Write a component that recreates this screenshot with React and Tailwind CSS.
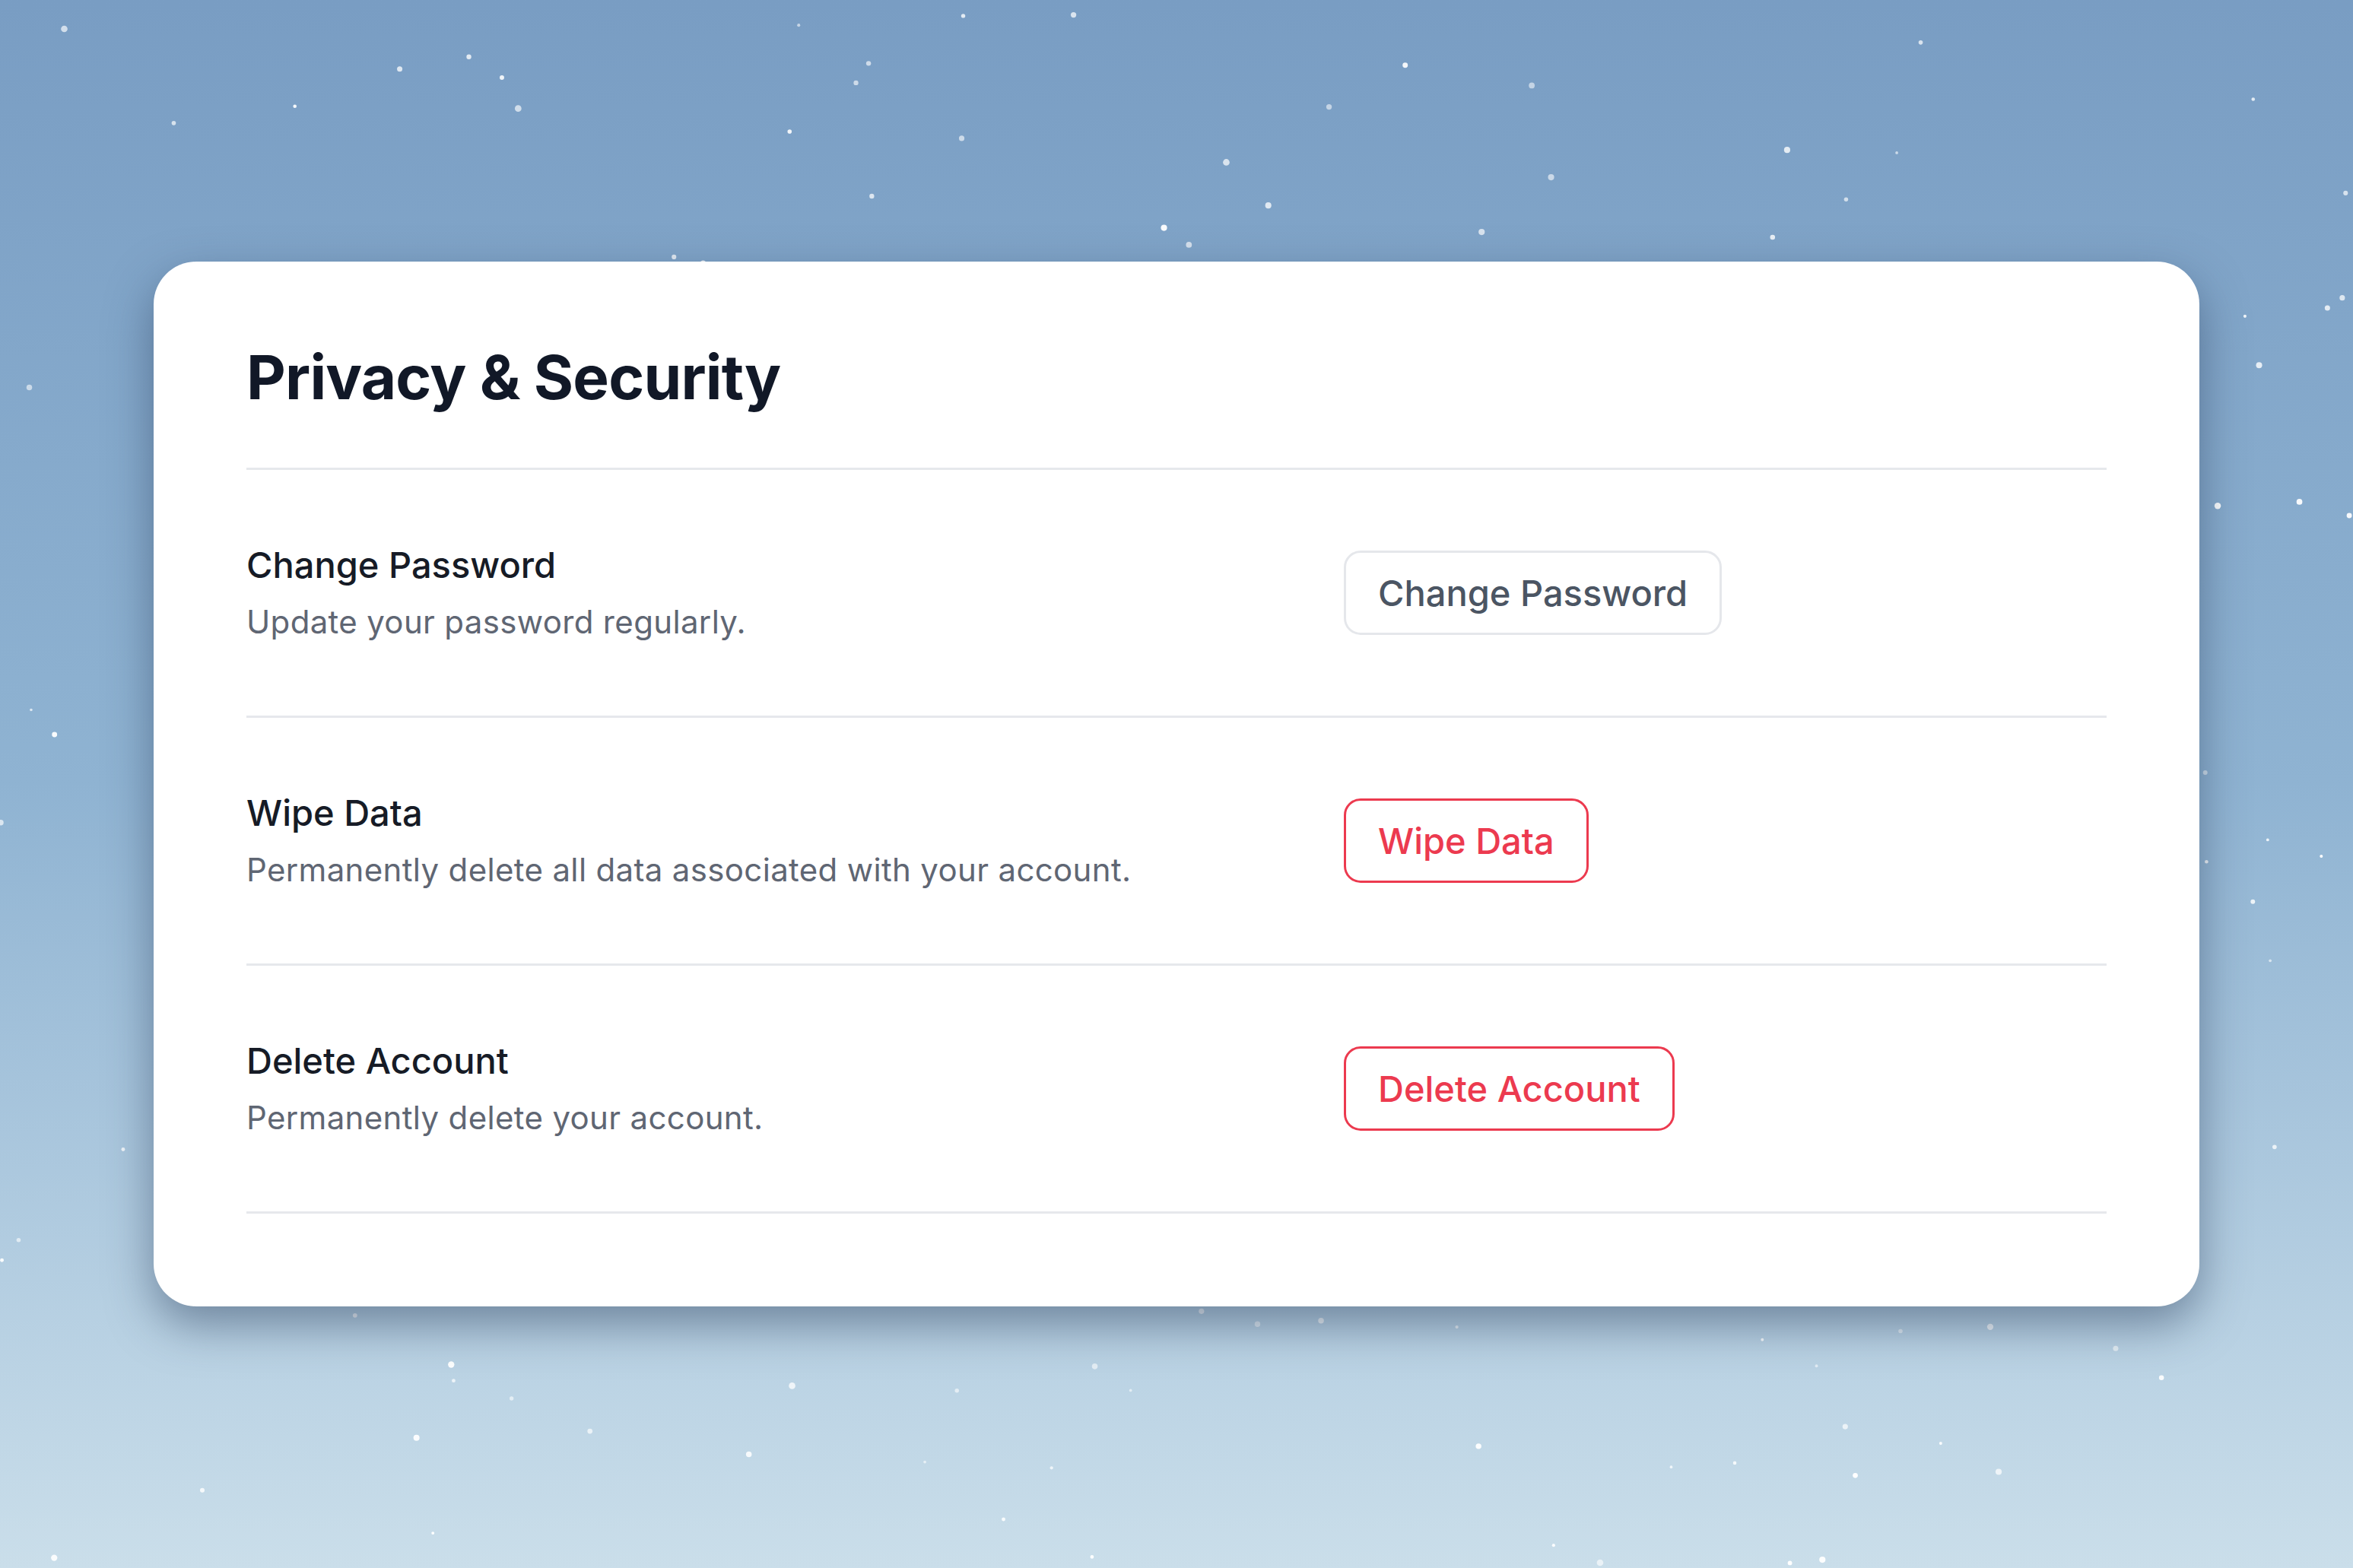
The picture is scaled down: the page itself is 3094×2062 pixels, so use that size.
import { useMemo } from "react";

const ROWS = [
  {
    title: "Change Password",
    hint: "Update your password regularly.",
    action: "Change Password",
    danger: false,
  },
  {
    title: "Wipe Data",
    hint: "Permanently delete all data associated with your account.",
    action: "Wipe Data",
    danger: true,
  },
  {
    title: "Delete Account",
    hint: "Permanently delete your account.",
    action: "Delete Account",
    danger: true,
  },
];

// small deterministic rng so the specks stay put between renders
function rng(seed) {
  let s = seed;
  return () => {
    s = (s * 16807) % 2147483647;
    return (s - 1) / 2147483646;
  };
}

function Specks() {
  const dots = useMemo(() => {
    const r = rng(42);
    return Array.from({ length: 220 }, () => ({
      x: r() * 3094,
      y: r() * 2062,
      r: 1.8 + r() * 2.6,
      o: 0.55 + r() * 0.45,
    }));
  }, []);
  return (
    <svg className="pointer-events-none absolute inset-0" width="3094" height="2062" viewBox="0 0 3094 2062">
      {dots.map((d, i) => (
        <circle key={i} cx={d.x} cy={d.y} r={d.r} fill="#ffffff" opacity={d.o} />
      ))}
    </svg>
  );
}

export default function App() {
  return (
    <div
      className="relative flex h-[2062px] w-full items-center justify-center overflow-hidden bg-gradient-to-b from-[#799dc3] via-[#8fb3d2] to-[#cadeea]"
      style={{ fontFamily: "Inter, 'Noto Sans', sans-serif" }}
    >
      <Specks />
      <section className="relative h-[1374px] w-[2690px] rounded-[56px] bg-white px-[122px] pt-[112px] shadow-[0_24px_60px_rgba(40,60,90,0.5)]">
        <h1 className="border-b-[3px] border-[#e6e8ec] pb-[79px] text-[80px] font-bold leading-none tracking-[-0.01em] text-[#111827]">
          Privacy &amp; Security
        </h1>
        {ROWS.map((row) => (
          <div
            key={row.title}
            className="grid h-[326px] grid-cols-[1443px_1fr] items-center border-b-[3px] border-[#e6e8ec]"
          >
            <div className="flex flex-col gap-[17px]">
              <div className="text-[47px] font-medium leading-[60px] text-[#161b26]">{row.title}</div>
              <div className="text-[42px] leading-[56px] tracking-[0.008em] text-[#5f6673]">{row.hint}</div>
            </div>
            <div>
              <button
                className={`h-[111px] rounded-[22px] border-[3px] bg-white px-[42px] text-[47px] font-medium leading-none ${
                  row.danger ? "border-[#ec3a4f] text-[#ec3a4f]" : "border-[#e5e7eb] text-[#4b5563]"
                }`}
              >
                {row.action}
              </button>
            </div>
          </div>
        ))}
      </section>
    </div>
  );
}
